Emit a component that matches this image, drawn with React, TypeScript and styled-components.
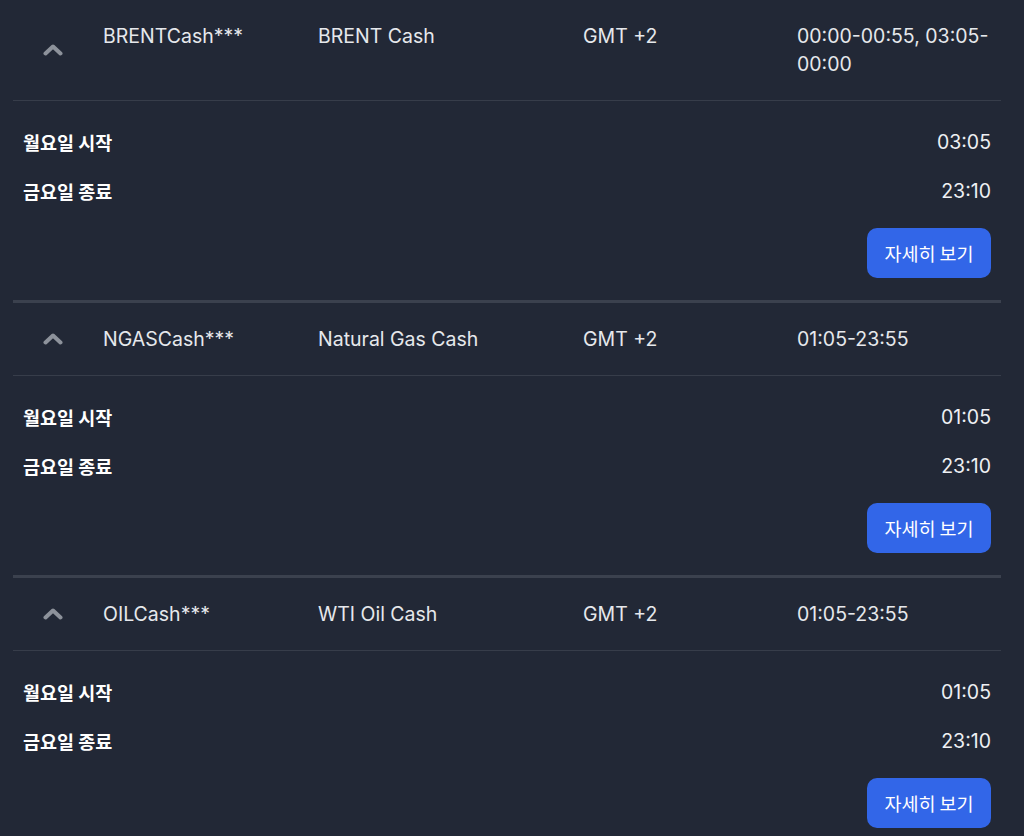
import React from "react";
import styled, { createGlobalStyle } from "styled-components";

const GlobalStyle = createGlobalStyle`
  html, body {
    margin: 0;
    padding: 0;
    background: #222836;
  }
  body {
    font-family: Inter, "Noto Sans CJK KR", sans-serif;
    color: #e8eaee;
  }
`;

const Page = styled.div`
  width: 988px;
  margin-left: 13px;
  background: #222836;
  min-height: 836px;
`;

const Section = styled.section`
  border-bottom: 3px solid #3b414e;
`;

const HeaderRow = styled.div`
  display: grid;
  grid-template-columns: 90px 215px 265px 214px 1fr;
  align-items: start;
  padding: 22px 0;
  border-bottom: 1px solid #373d4a;
  font-size: 19.5px;
  line-height: 28px;
  color: #e6e8ec;
`;

const ChevronCell = styled.div`
  display: flex;
  align-items: center;
  align-self: center;
  padding-left: 30px;
`;

const Cell = styled.div`
  padding-right: 10px;
`;

const Details = styled.div`
  display: flex;
  flex-direction: column;
  padding: 16px 10px 22px;
`;

const InfoRow = styled.div`
  display: flex;
  justify-content: space-between;
  align-items: center;
  height: 49px;
`;

const Label = styled.span`
  font-family: "Noto Sans CJK KR", sans-serif;
  font-weight: 700;
  font-size: 18.5px;
  color: #ffffff;
`;

const Value = styled.span`
  font-size: 19.5px;
  color: #eef0f3;
`;

const ButtonRow = styled.div`
  display: flex;
  justify-content: flex-end;
  margin-top: 13px;
`;

const DetailButton = styled.button`
  height: 50px;
  width: 124px;
  border: none;
  border-radius: 10px;
  background: #3266e8;
  color: #ffffff;
  font-family: "Noto Sans CJK KR", sans-serif;
  font-size: 18.5px;
  cursor: pointer;
  padding: 0;
`;

const Chevron = () => (
  <svg width="20" height="12" viewBox="0 0 20 12" fill="none">
    <path
      d="M2.5 9.5 L10 2.5 L17.5 9.5"
      stroke="#8d929b"
      strokeWidth="4"
      strokeLinecap="round"
      strokeLinejoin="round"
    />
  </svg>
);

type Item = {
  symbol: string;
  name: string;
  tz: string;
  hours: string;
  start: string;
  end: string;
};

const items: Item[] = [
  {
    symbol: "BRENTCash***",
    name: "BRENT Cash",
    tz: "GMT +2",
    hours: "00:00-00:55, 03:05-00:00",
    start: "03:05",
    end: "23:10",
  },
  {
    symbol: "NGASCash***",
    name: "Natural Gas Cash",
    tz: "GMT +2",
    hours: "01:05-23:55",
    start: "01:05",
    end: "23:10",
  },
  {
    symbol: "OILCash***",
    name: "WTI Oil Cash",
    tz: "GMT +2",
    hours: "01:05-23:55",
    start: "01:05",
    end: "23:10",
  },
];

export default function App() {
  return (
    <>
      <GlobalStyle />
      <Page>
        {items.map((it) => (
          <Section key={it.symbol}>
            <HeaderRow>
              <ChevronCell>
                <Chevron />
              </ChevronCell>
              <Cell>{it.symbol}</Cell>
              <Cell>{it.name}</Cell>
              <Cell>{it.tz}</Cell>
              <Cell>{it.hours}</Cell>
            </HeaderRow>
            <Details>
              <InfoRow>
                <Label>월요일 시작</Label>
                <Value>{it.start}</Value>
              </InfoRow>
              <InfoRow>
                <Label>금요일 종료</Label>
                <Value>{it.end}</Value>
              </InfoRow>
              <ButtonRow>
                <DetailButton>자세히 보기</DetailButton>
              </ButtonRow>
            </Details>
          </Section>
        ))}
      </Page>
    </>
  );
}
